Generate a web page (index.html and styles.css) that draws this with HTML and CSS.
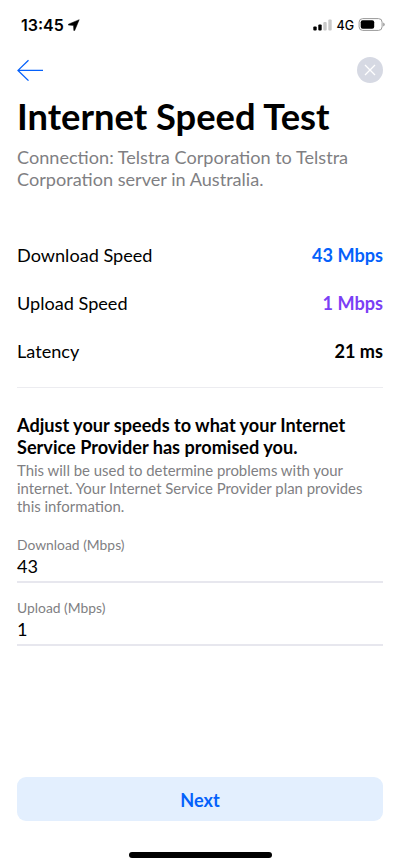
FILE: index.html
```html
<!DOCTYPE html>
<html lang="en">
<head>
<meta charset="utf-8">
<title>Internet Speed Test</title>
<link rel="stylesheet" href="styles.css">
</head>
<body>
<div class="screen">
  <header class="status">
    <span class="time">13:45</span>
    <svg class="location" width="12" height="12" viewBox="0 0 12 12"><path d="M11.2.7.4 5.2v.9l5.1.3.3 5.1h.9z" stroke="#000" stroke-width=".5" stroke-linejoin="round"/></svg>
    <svg class="signal" width="19" height="12" viewBox="0 0 19 12"><rect x=".3" y="7.4" width="3.4" height="4.2" rx="1"/><rect x="5.3" y="5.4" width="3.4" height="6.2" rx="1"/><g fill="#c9c9c9"><rect x="10.3" y="3" width="3.4" height="8.6" rx="1"/><rect x="15.3" y=".4" width="3.4" height="11.2" rx="1"/></g></svg>
    <span class="network">4G</span>
    <svg class="battery" width="27" height="13" viewBox="0 0 27 13"><rect x="1.1" y=".6" width="23" height="11.8" rx="3.6" fill="none" stroke="#999"/><rect x="2.7" y="2.2" width="13.5" height="8.6" rx="2"/><path d="M25.2 4.4q1.5.6 1.5 2.1t-1.5 2.1z" fill="#999"/></svg>
  </header>
  <nav class="nav">
    <svg width="26" height="22" viewBox="0 0 26 22" fill="none" stroke="#0561fb" stroke-width="1.3"><path d="M26 11.4H1M11.5 1.2 1 11.4l10.5 10.2"/></svg>
    <svg width="26" height="26" viewBox="0 0 26 26"><circle cx="13" cy="13" r="13" fill="#d6d9e3"/><path d="m8 8 10 10M18 8 8 18" stroke="#fff" stroke-width="1.3"/></svg>
  </nav>
  <main class="content">
    <h1>Internet Speed Test</h1>
    <p class="connection">Connection: Telstra Corporation to Telstra<br>Corporation server in Australia.</p>
    <dl class="results">
      <div class="result"><dt>Download Speed</dt><dd class="down">43 Mbps</dd></div>
      <div class="result"><dt>Upload Speed</dt><dd class="up">1 Mbps</dd></div>
      <div class="result"><dt>Latency</dt><dd>21 ms</dd></div>
    </dl>
    <h2>Adjust your speeds to what your Internet<br>Service Provider has promised you.</h2>
    <p class="hint">This will be used to determine problems with your<br>internet. Your Internet Service Provider plan provides<br>this information.</p>
    <div class="field"><span class="label">Download (Mbps)</span><span class="value">43</span></div>
    <div class="field"><span class="label">Upload (Mbps)</span><span class="value">1</span></div>
  </main>
  <button class="next">Next</button>
  <div class="home"></div>
</div>
</body>
</html>
```
FILE: styles.css
```css
* { box-sizing: border-box; margin: 0; }
body { background: #fff; color: #000; font-family: Lato, sans-serif; }
.screen { width: 400px; height: 866px; display: flex; flex-direction: column; overflow: hidden; }
.status { height: 49px; padding: 0 15px 0 21px; display: flex; align-items: center; font-family: Inter, sans-serif; }
.time { font-size: 16px; font-weight: 600; line-height: 20px; }
.location { margin-left: 4px; }
.signal { margin-left: auto; }
.network { font-size: 12.5px; font-weight: 500; margin: 0 4px; padding-top: 2px; line-height: 16px; }
.nav { height: 41px; padding: 1px 17px 0; display: flex; align-items: center; justify-content: space-between; }
.content { padding: 4px 17px 0; }
h1 { font-size: 36.3px; line-height: 44px; font-weight: 700; white-space: nowrap; }
.connection { margin-top: 9px; font-size: 18.13px; line-height: 21.75px; color: #7f7f83; white-space: nowrap; }
.results { margin-top: 40.5px; height: 157px; border-bottom: 1px solid #ececf0; }
.result { height: 48px; display: flex; align-items: center; justify-content: space-between; font-size: 18.13px; line-height: 22px; }
dd { font-weight: 700; }
.down { color: #0561fb; }
.up { color: #7b3ff5; }
h2 { margin-top: 27px; font-size: 18.13px; line-height: 21.75px; font-weight: 700; white-space: nowrap; }
.hint { margin-top: 3.5px; font-size: 14.93px; line-height: 17.9px; color: #7f7f83; white-space: nowrap; }
.field { height: 50px; margin-top: 13px; border-bottom: 2px solid #e7e7ee; display: flex; flex-direction: column; }
.hint + .field { margin-top: 17.3px; }
.label { margin-top: 3px; font-size: 13.87px; line-height: 18px; color: #7f7f83; }
.value { margin-top: 1px; font-size: 18.13px; line-height: 22px; }
.next { margin: auto 17px 0; padding: 1px 0 0; height: 44px; flex-shrink: 0; border: 0; border-radius: 9px; background: #e3effe; color: #0561fb; font: 700 18.13px/22px Lato, sans-serif; }
.home { width: 143px; height: 6px; flex-shrink: 0; margin: 30.5px auto 8.5px; border-radius: 3px; background: #000; }
```
